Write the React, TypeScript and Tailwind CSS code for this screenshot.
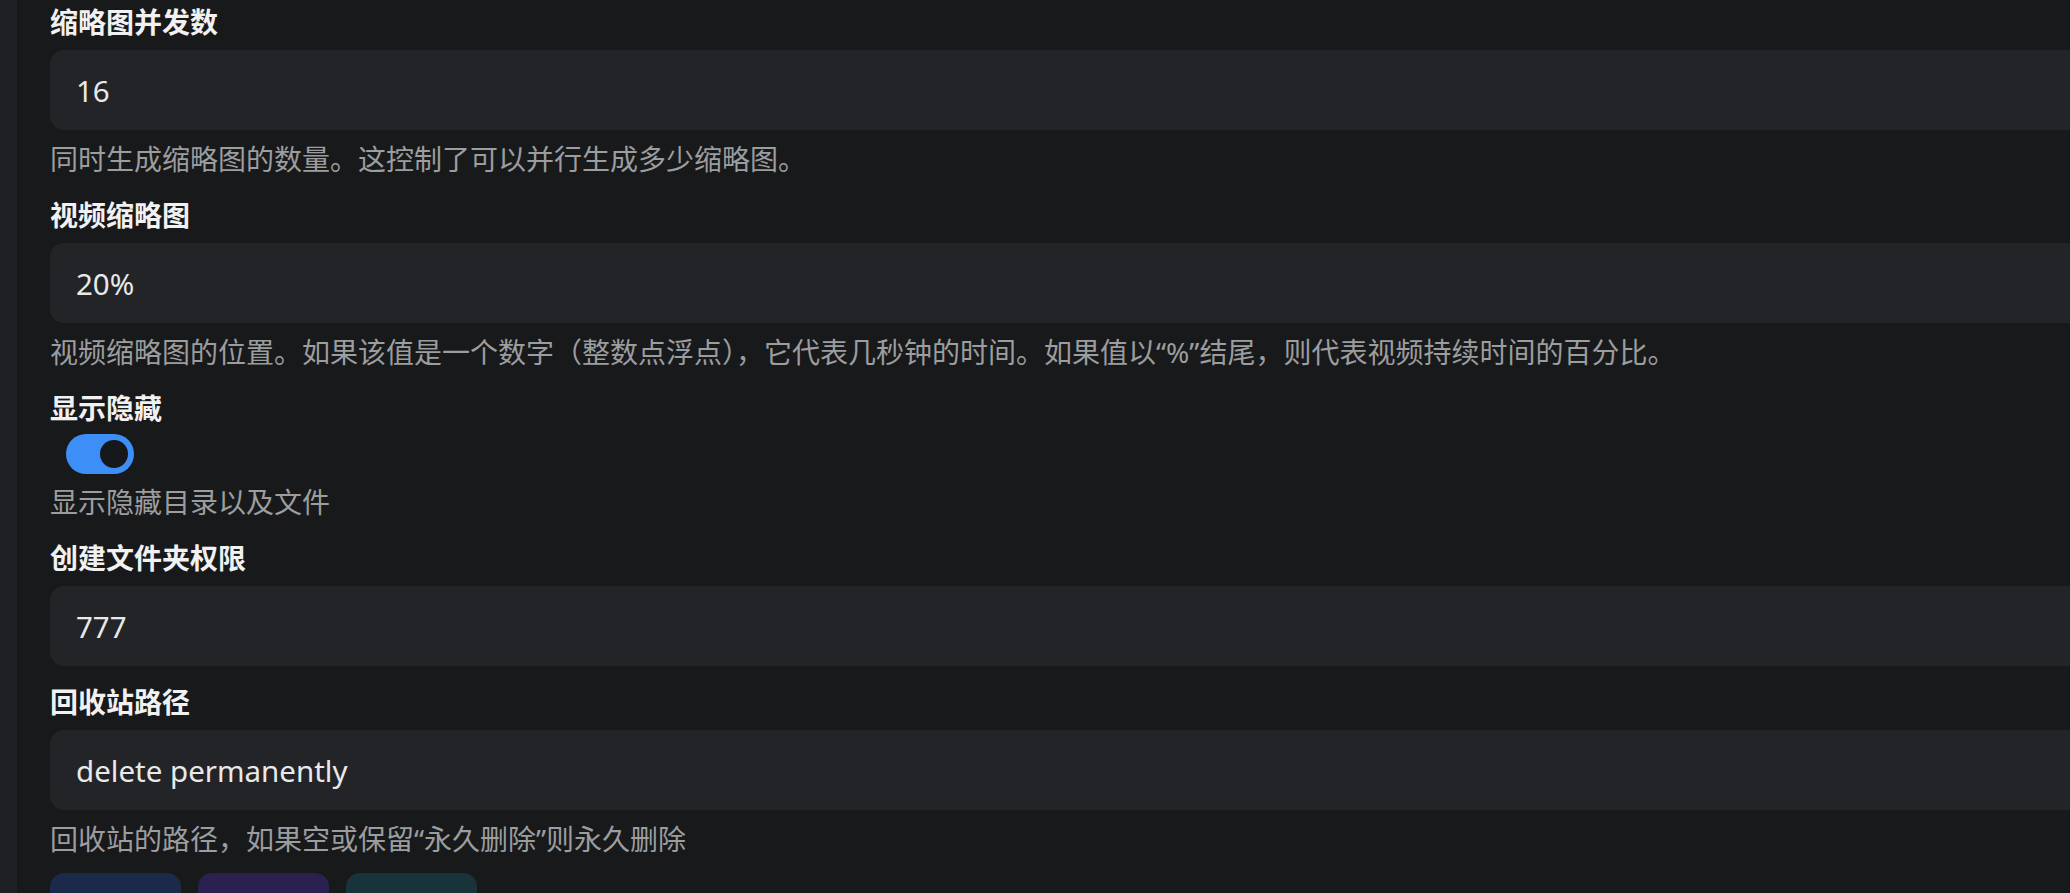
import React from "react";

type Setting = {
  label: string;
  kind: "input" | "switch";
  value?: string;
  on?: boolean;
  help?: string;
};

const settings: Setting[] = [
  {
    label: "缩略图并发数",
    kind: "input",
    value: "16",
    help: "同时生成缩略图的数量。这控制了可以并行生成多少缩略图。",
  },
  {
    label: "视频缩略图",
    kind: "input",
    value: "20%",
    help: "视频缩略图的位置。如果该值是一个数字（整数点浮点），它代表几秒钟的时间。如果值以“%”结尾，则代表视频持续时间的百分比。",
  },
  {
    label: "显示隐藏",
    kind: "switch",
    on: true,
    help: "显示隐藏目录以及文件",
  },
  {
    label: "创建文件夹权限",
    kind: "input",
    value: "777",
  },
  {
    label: "回收站路径",
    kind: "input",
    value: "delete permanently",
    help: "回收站的路径，如果空或保留“永久删除”则永久删除",
  },
];

function Toggle({ on }: { on?: boolean }) {
  return (
    <button
      type="button"
      className={[
        "ml-4 mt-[6px] flex h-[40px] w-[68px] items-center rounded-full px-[6px]",
        on ? "justify-end bg-[#3d8ef6]" : "justify-start bg-[#3a3b3f]",
      ].join(" ")}
    >
      <span className="block h-[28px] w-[28px] rounded-full bg-[#17181b]" />
    </button>
  );
}

function SettingRow({ s }: { s: Setting }) {
  return (
    <div className="flex flex-col">
      <div className="text-[28px] font-bold leading-[40px] text-[#f1f1f2]">{s.label}</div>
      {s.kind === "input" ? (
        <input
          readOnly
          value={s.value}
          className="mt-2 h-[80px] w-full rounded-[14px] bg-[#232427] pl-[26px] text-[29.5px] text-[#e9e9ea] outline-none"
        />
      ) : (
        <Toggle on={s.on} />
      )}
      {s.help && (
        <div
          className={[
            "text-[28px] leading-[40px] text-[#9c9d9f]",
            s.kind === "input" ? "mt-[9px]" : "mt-2",
          ].join(" ")}
        >
          {s.help}
        </div>
      )}
    </div>
  );
}

export default function App() {
  return (
    <div
      className="flex h-[893px] w-full overflow-hidden bg-[#18191b]"
      style={{ fontFamily: '"Noto Sans", "Noto Sans CJK SC", sans-serif' }}
    >
      {/* sidebar edge */}
      <div className="w-[17px] shrink-0 bg-[#1f2023]" />

      <div className="min-w-0 flex-1 pl-[33px] pt-[2px]">
        <div className="flex w-[2100px] flex-col gap-4">
          {settings.map((s) => (
            <SettingRow key={s.label} s={s} />
          ))}

          {/* action buttons */}
          <div className="-mt-[2px] flex gap-[17px]">
            <button type="button" className="h-[80px] w-[131px] rounded-[14px] bg-[#1b2a4b]" />
            <button type="button" className="h-[80px] w-[131px] rounded-[14px] bg-[#2b2150]" />
            <button type="button" className="h-[80px] w-[131px] rounded-[14px] bg-[#19333a]" />
          </div>
        </div>
      </div>
    </div>
  );
}
